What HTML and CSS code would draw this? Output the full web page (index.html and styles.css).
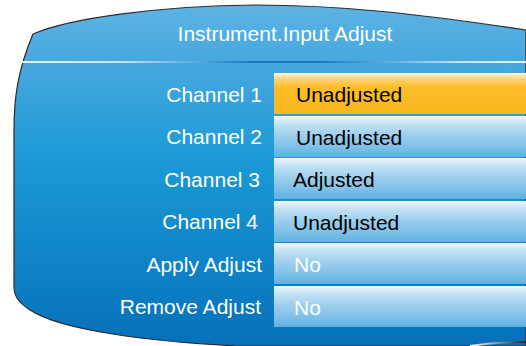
FILE: index.html
```
<!DOCTYPE html>
<html>
	<head>
		<link rel="stylesheet" href="styles.css">
	</head>
	<body>
		<div class = "screen">
			<svg class = "panel-shape" width = "526" height = "346" viewBox = "0 0 526 346">
				<defs>
					<linearGradient id = "panelFill" x1 = "0" y1 = "0" x2 = "0" y2 = "1">
						<stop offset = "0" stop-color = "#5cb3e3"/>
						<stop offset = "0.2" stop-color = "#43a6dd"/>
						<stop offset = "0.45" stop-color = "#1b9ad6"/>
						<stop offset = "1" stop-color = "#0670ba"/>
					</linearGradient>
					<linearGradient id = "cornerLine" x1 = "0" y1 = "0" x2 = "1" y2 = "0">
						<stop offset = "0" stop-color = "#ffffff"/>
						<stop offset = "1" stop-color = "#222222"/>
					</linearGradient>
				</defs>
				<path d = "M33,34 C70,18 160,6 255,5 C340,5 420,14 526,30 L526,346 L240,346 C150,342 60,330 30,310 C18,302 14,296 14,286 L14,130 C14,100 17,72 33,34 Z" fill = "url(#panelFill)" stroke = "#2b2b2b" stroke-width = "1.2"/>
				<path d = "M470,346 C490,343 510,342 526,342" fill = "none" stroke = "url(#cornerLine)" stroke-width = "2"/>
			</svg>
			<div class = "header">
				<div class = "title">Instrument.Input Adjust</div>
			</div>
			<div class = "separator"></div>
			<div class = "rows">
				<div class = "row">
					<div class = "row-label">Channel 1</div>
					<div class = "row-value selected">Unadjusted</div>
				</div>
				<div class = "row">
					<div class = "row-label">Channel 2</div>
					<div class = "row-value">Unadjusted</div>
				</div>
				<div class = "row">
					<div class = "row-label shift-2">Channel 3</div>
					<div class = "row-value shift-3">Adjusted</div>
				</div>
				<div class = "row">
					<div class = "row-label shift-4">Channel 4</div>
					<div class = "row-value shift-3">Unadjusted</div>
				</div>
				<div class = "row">
					<div class = "row-label">Apply Adjust</div>
					<div class = "row-value light">No</div>
				</div>
				<div class = "row">
					<div class = "row-label shift-1">Remove Adjust</div>
					<div class = "row-value light">No</div>
				</div>
			</div>
		</div>
	</body>
</html>
```

FILE: styles.css
```
body
{
	margin: 0;
	background-color: white;
	font-family: "Liberation Sans", Arial, sans-serif;
}
.screen
{
	position: relative;
	width: 526px;
	height: 346px;
	overflow: hidden;
}
.panel-shape
{
	position: absolute;
	left: 0;
	top: 0;
}
.header
{
	position: relative;
	display: flex;
	align-items: center;
	justify-content: center;
	height: 61px;
	padding-left: 44px;
	padding-top: 6px;
	box-sizing: border-box;
}
.title
{
	color: white;
	font-size: 21px;
}
.separator
{
	position: relative;
	height: 2px;
	margin-left: 18px;
	background: linear-gradient(to right, #e4f2fb 0%, #c9e3f5 20%, #5fa9db 35%, #1c7ac3 45%, #1c7ac3 60%, #5fa9db 72%, #c9e3f5 88%, #e8f4fc 100%);
}
.rows
{
	position: relative;
	display: flex;
	flex-direction: column;
	gap: 1.6px;
	margin-top: 10px;
}
.row
{
	display: flex;
	align-items: center;
	height: 41px;
}
.row-label
{
	width: 262px;
	padding-top: 2px;
	text-align: right;
	color: white;
	font-size: 21px;
	box-sizing: border-box;
}
.shift-1
{
	padding-right: 1px;
}
.shift-2
{
	padding-right: 2px;
}
.shift-4
{
	padding-right: 4px;
}
.row-value
{
	display: flex;
	align-items: center;
	height: 100%;
	margin-left: 12px;
	flex: 1;
	padding-left: 22px;
	padding-top: 3px;
	box-sizing: border-box;
	color: black;
	font-size: 21px;
	background: linear-gradient(to bottom, #f2f7fb 0%, #c6e3f5 18%, #9fd0ee 45%, #7fc0e8 75%, #5fb1e1 100%);
}
.row-value.shift-3
{
	padding-left: 19px;
}
.row-value.selected
{
	background: linear-gradient(to bottom, #fff6e4 0%, #fcd277 15%, #fbbd27 35%, #f9b61e 100%);
}
.row-value.light
{
	color: white;
	padding-left: 20px;
}
```
